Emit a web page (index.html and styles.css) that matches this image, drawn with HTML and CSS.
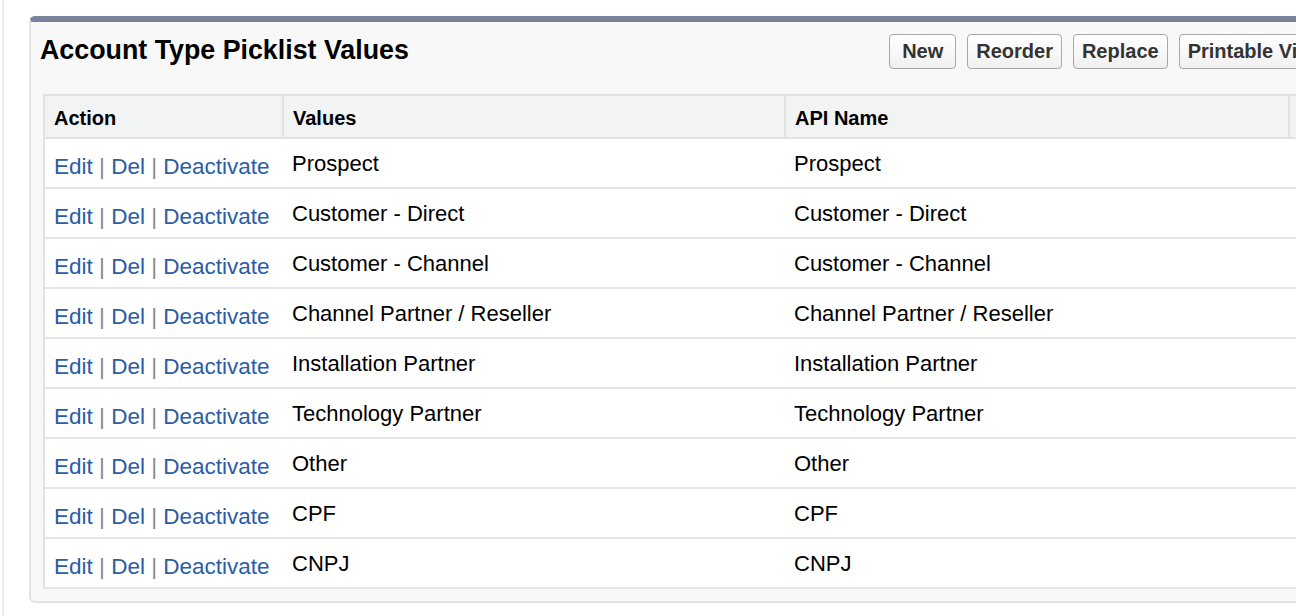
FILE: index.html
```html
<!DOCTYPE html>
<html>
<head>
<meta charset="utf-8">
<link rel="stylesheet" href="styles.css">
</head>
<body>
<div class="page">
  <div class="panel">
    <div class="panel-head">
      <h2 class="title">Account Type Picklist Values</h2>
      <div class="buttons">
        <button class="btn">New</button>
        <button class="btn">Reorder</button>
        <button class="btn">Replace</button>
        <button class="btn">Printable View</button>
      </div>
    </div>
    <table class="list">
      <colgroup>
        <col class="c-action"><col class="c-values"><col class="c-api"><col class="c-more">
      </colgroup>
      <thead>
        <tr><th>Action</th><th>Values</th><th>API Name</th><th>Default</th></tr>
      </thead>
      <tbody>
        <tr><td class="act"><a>Edit</a> <span class="sep">|</span> <a>Del</a> <span class="sep">|</span> <a>Deactivate</a></td><td>Prospect</td><td>Prospect</td><td></td></tr>
        <tr><td class="act"><a>Edit</a> <span class="sep">|</span> <a>Del</a> <span class="sep">|</span> <a>Deactivate</a></td><td>Customer - Direct</td><td>Customer - Direct</td><td></td></tr>
        <tr><td class="act"><a>Edit</a> <span class="sep">|</span> <a>Del</a> <span class="sep">|</span> <a>Deactivate</a></td><td>Customer - Channel</td><td>Customer - Channel</td><td></td></tr>
        <tr><td class="act"><a>Edit</a> <span class="sep">|</span> <a>Del</a> <span class="sep">|</span> <a>Deactivate</a></td><td>Channel Partner / Reseller</td><td>Channel Partner / Reseller</td><td></td></tr>
        <tr><td class="act"><a>Edit</a> <span class="sep">|</span> <a>Del</a> <span class="sep">|</span> <a>Deactivate</a></td><td>Installation Partner</td><td>Installation Partner</td><td></td></tr>
        <tr><td class="act"><a>Edit</a> <span class="sep">|</span> <a>Del</a> <span class="sep">|</span> <a>Deactivate</a></td><td>Technology Partner</td><td>Technology Partner</td><td></td></tr>
        <tr><td class="act"><a>Edit</a> <span class="sep">|</span> <a>Del</a> <span class="sep">|</span> <a>Deactivate</a></td><td>Other</td><td>Other</td><td></td></tr>
        <tr><td class="act"><a>Edit</a> <span class="sep">|</span> <a>Del</a> <span class="sep">|</span> <a>Deactivate</a></td><td>CPF</td><td>CPF</td><td></td></tr>
        <tr><td class="act"><a>Edit</a> <span class="sep">|</span> <a>Del</a> <span class="sep">|</span> <a>Deactivate</a></td><td>CNPJ</td><td>CNPJ</td><td></td></tr>
      </tbody>
    </table>
  </div>
</div>
</body>
</html>
```
FILE: styles.css
```css
html, body {
  margin: 0;
  padding: 0;
  background: #fff;
  overflow: hidden;
  height: 616px;
}
body {
  font-family: "Liberation Sans", Arial, Helvetica, sans-serif;
  color: #000;
}
.page {
  margin-left: 2px;
  border-left: 2px solid #ececec;
  height: 616px;
  padding-top: 16px;
  padding-left: 25px;
  box-sizing: border-box;
}
.panel {
  width: 1400px;
  background: #f8f8f8;
  border: 2px solid #e3e3e3;
  border-top: 6px solid #78829a;
  border-radius: 6px;
  padding: 0 0 12px 12px;
}
.panel-head {
  display: flex;
  align-items: flex-start;
  justify-content: space-between;
  height: 72px;
  margin-left: -3px;
  padding-right: 110px;
}
.title {
  margin: 15px 0 0 0;
  font-size: 26.8px;
  line-height: 27px;
  font-weight: bold;
}
.buttons {
  display: flex;
  gap: 11px;
  margin-top: 12px;
}
.btn {
  font-family: "Liberation Sans", Arial, sans-serif;
  font-size: 20px;
  font-weight: bold;
  color: #333;
  height: 35px;
  min-width: 67px;
  padding: 0 8px;
  border: 1.5px solid #a8a8a8;
  border-radius: 4px;
  background: linear-gradient(#ffffff, #f0f0f0);
  white-space: nowrap;
}
.list {
  border-collapse: separate;
  border-spacing: 0;
  table-layout: fixed;
  width: 1388px;
  background: #fff;
  border-left: 2px solid #e2e2e2;
  border-top: 2px solid #e2e2e2;
}
.c-action { width: 239px; }
.c-values { width: 502px; }
.c-api { width: 504px; }
.list th {
  background: #f2f3f3;
  font-size: 20px;
  font-weight: bold;
  text-align: left;
  height: 37px;
  padding: 4px 9px 0 9px;
  border-right: 2px solid #e2e2e2;
  border-bottom: 2px solid #e2e2e2;
  vertical-align: middle;
}
.list td {
  height: 47px;
  font-size: 22px;
  padding: 1px 9px 0 8px;
  border-bottom: 2px solid #e6e6e6;
  white-space: nowrap;
  vertical-align: middle;
}
.list td.act {
  height: 40px;
  padding: 8px 0 0 9px;
  font-size: 22.5px;
}
.list a {
  color: #2a5ca8;
}
.sep {
  color: #888;
}
```
